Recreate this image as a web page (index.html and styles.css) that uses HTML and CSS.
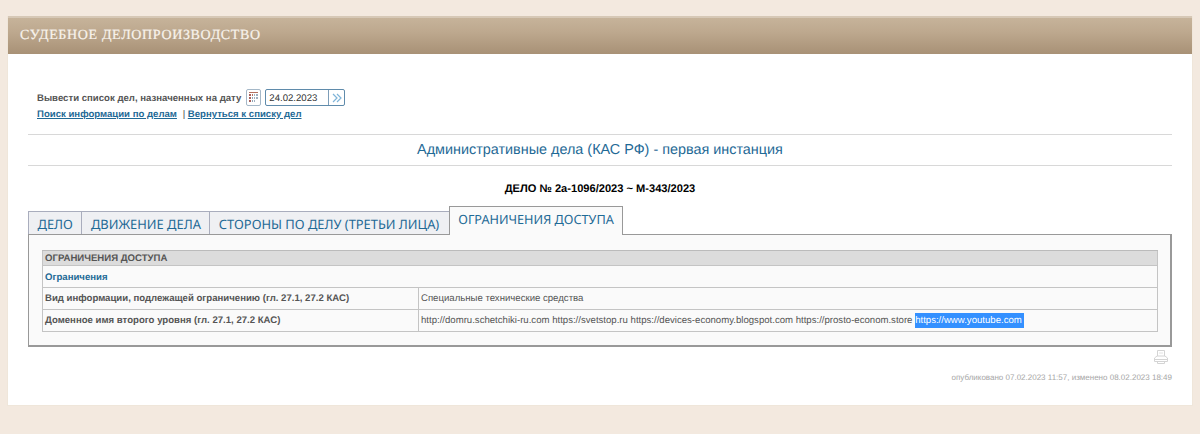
FILE: index.html
```html
<!DOCTYPE html>
<html lang="ru">
<head>
<meta charset="utf-8">
<title>Судебное делопроизводство</title>
<link rel="stylesheet" href="styles.css">
</head>
<body>
<main class="card">
  <h1 class="card-head">СУДЕБНОЕ ДЕЛОПРОИЗВОДСТВО</h1>
  <div class="content">
    <div class="date-row">
      <span class="date-label">Вывести список дел, назначенных на дату</span>
      <button class="cal-btn" type="button" aria-label="Календарь">
        <svg width="11" height="12" viewBox="0 0 11 12"><g fill="#9fb0c0"><rect x="1" y="0" width="9" height="1" fill="#b4705f"/><rect x="1" y="2" width="2" height="2" fill="#a8605a"/><rect x="4" y="2" width="1" height="2" fill="#b4705f"/><rect x="6" y="2" width="1" height="2"/><rect x="8" y="2" width="2" height="2"/><rect x="1" y="5" width="2" height="2" fill="#a8605a"/><rect x="4" y="5" width="1" height="2" fill="#8fa3b5"/><rect x="6" y="5" width="1" height="2"/><rect x="8" y="5" width="2" height="2"/><rect x="1" y="8" width="2" height="2" fill="#a8605a"/><rect x="4" y="8" width="1" height="2" fill="#8fa3b5"/><rect x="6" y="8" width="1" height="2"/></g></svg>
      </button>
      <div class="date-box">
        <span class="date-value">24.02.2023</span>
        <span class="date-go"><svg width="10" height="10" viewBox="0 0 10 10" fill="none" stroke="#7fb4d8" stroke-width="1.200"><path d="M1 1 5 5 1 9M5 1 9 5 5 9"/></svg></span>
      </div>
    </div>
    <div class="links">
      <a href="#">Поиск информации по делам</a>
      <span class="sep">|</span>
      <a href="#">Вернуться к списку дел</a>
    </div>
    <h2 class="section-title">Административные дела (КАС РФ) - первая инстанция</h2>
    <h3 class="case-no">ДЕЛО № 2а-1096/2023 ~ М-343/2023</h3>
    <div class="tabs">
      <a class="tab" href="#">ДЕЛО</a>
      <a class="tab" href="#">ДВИЖЕНИЕ ДЕЛА</a>
      <a class="tab tab-wide" href="#">СТОРОНЫ ПО ДЕЛУ (ТРЕТЬИ ЛИЦА)</a>
      <a class="tab tab-active" href="#">ОГРАНИЧЕНИЯ ДОСТУПА</a>
    </div>
    <div class="panel">
      <table class="info">
        <colgroup><col class="col-key"><col></colgroup>
        <tr class="row-head"><th colspan="2">ОГРАНИЧЕНИЯ ДОСТУПА</th></tr>
        <tr class="row-sub"><td colspan="2">Ограничения</td></tr>
        <tr class="row-data">
          <td class="cell-key">Вид информации, подлежащей ограничению (гл. 27.1, 27.2 КАС)</td>
          <td>Специальные технические средства</td>
        </tr>
        <tr class="row-data">
          <td class="cell-key">Доменное имя второго уровня (гл. 27.1, 27.2 КАС)</td>
          <td>http://domru.schetchiki-ru.com https://svetstop.ru https://devices-economy.blogspot.com https://prosto-econom.store <span class="hl">https://www.youtube.com</span></td>
        </tr>
      </table>
    </div>
    <div class="print-row">
      <svg width="14" height="14" viewBox="0 0 14 14" fill="none" stroke="#d4d4d4" stroke-width="1"><path d="M3.500 6V.5h7V6"/><path d="M5 3h4" stroke="#e2e2e2"/><path d="M3 6h8l2.500 2v3.500H.5V8z"/><path d="M.5 9.500h13M3.500 11.500v2h7v-2"/></svg>
    </div>
    <div class="stamp">опубликовано 07.02.2023 11:57, изменено 08.02.2023 18:49</div>
  </div>
</main>
</body>
</html>
```
FILE: styles.css
```css
* { box-sizing: border-box; }
html, body { margin: 0; height: 434px; overflow: hidden; }
body {
  background: #f3e9df;
  padding: 16px 7px 0 7px;
  font-family: "Liberation Sans", Arial, sans-serif;
  color: #555;
  text-rendering: geometricPrecision;
}
.card {
  background: #fff;
  height: 390px;
  border: 1px solid #efe6da;
  border-top: 0;
}
.card-head {
  margin: 0;
  height: 38px;
  padding: 0 0 0 12px;
  background: linear-gradient(#c6b39a 0%, #bda88e 40%, #a89176 100%);
  border-top: 2px solid #d6c8b6;
  font-family: "Liberation Serif", serif;
  font-weight: 400;
  font-size: 14px;
  letter-spacing: .65px;
  line-height: 35px;
  color: #f8f3ec;
  -webkit-text-stroke: .2px #f8f3ec;
}
.content { padding: 35px 20px 0 20px; }
.date-row {
  display: flex;
  align-items: center;
  height: 17px;
  padding-left: 9px;
}
.date-label { font-size: 9.600px; line-height: 13px; padding-top: 2px; font-weight: 700; color: #555; }
.cal-btn {
  margin-left: 5px;
  width: 15px;
  height: 17px;
  padding: 0;
  display: flex;
  align-items: center;
  justify-content: center;
  background: #fff;
  border: 1px solid #a5b8c8;
  border-radius: 2px;
}
.date-box {
  margin-left: 4px;
  width: 80px;
  height: 17px;
  display: flex;
  border: 1px solid #5f8bab;
  border-radius: 2px;
}
.date-value {
  flex: 1;
  padding-left: 3px;
  font-size: 9.600px;
  line-height: 17px;
  color: #333;
}
.date-go {
  width: 16px;
  display: flex;
  align-items: center;
  justify-content: center;
  border-left: 1px solid #7d9db8;
}
.links {
  padding-left: 9px;
  margin-top: 2px;
  height: 13px;
  font-size: 9.600px;
  line-height: 13px;
  font-weight: 700;
}
.links a { color: #1f6a96; }
.sep { font-weight: 400; margin-left: 3px; color: #444; }
.section-title {
  margin: 13px 0 0;
  height: 32px;
  border-top: 1px solid #d8d8d8;
  border-bottom: 1px solid #d8d8d8;
  font-size: 14.400px;
  font-weight: 400;
  line-height: 31px;
  text-align: center;
  color: #1f6a96;
}
.case-no {
  margin: 15px 0 0;
  height: 15px;
  font-size: 11.100px;
  line-height: 17px;
  font-weight: 700;
  text-align: center;
  color: #000;
}
.tabs {
  display: flex;
  align-items: flex-end;
  height: 29px;
  margin-top: 9px;
  position: relative;
  z-index: 1;
}
.tab {
  height: 23px;
  padding: 0 8.500px;
  border: 1px solid #a9adbd;
  border-bottom: 0;
  margin-right: -1px;
  background: #eff0f3;
  font-family: "Noto Sans", sans-serif;
  font-size: 12.900px;
  line-height: 24px;
  color: #1f6a96;
  text-decoration: none;
  white-space: nowrap;
}
.tab-wide { padding-right: 9.500px; }
.tab-active {
  height: 29px;
  background: #fafafa;
  border-color: #999;
  font-size: 12.700px;
  line-height: 24px;
  margin-bottom: -1px;
}
.panel {
  height: 113px;
  padding: 15px 12px 0 13px;
  background: #fafafa;
  border: 1px solid #999;
  border-width: 1px 2px 2px 1px;
}
.info {
  width: 100%;
  table-layout: fixed;
  border-collapse: collapse;
  font-size: 9.600px;
  line-height: 13px;
  color: #555;
  border: 1px solid #c4c4c4;
}
.col-key { width: 376px; }
.row-head th {
  height: 15px;
  padding: 0 0 0 2px;
  background: #dcdcdc;
  border-bottom: 1px solid #c4c4c4;
  border-top: 1px solid #bbb;
  font-weight: 700;
  text-align: left;
}
.row-sub td {
  height: 22px;
  padding: 2px 0 0 2px;
  font-weight: 700;
  color: #1f6a96;
}
.row-data td {
  height: 22px;
  padding: 0 0 0 2px;
  border-top: 1px solid #c4c4c4;
}
.row-data td:last-child { border-left: 1px solid #c4c4c4; padding-left: 2px; }
.cell-key { font-weight: 700; }
.hl { background: #3390ff; color: #fff; padding: 2px 2px 2px 0; }
.print-row { display: flex; justify-content: flex-end; padding: 3px 4px 0 0; height: 17px; }
.stamp {
  margin-top: 8px;
  text-align: right;
  font-size: 8px;
  line-height: 11px;
  color: #a6a6a6;
}
```
